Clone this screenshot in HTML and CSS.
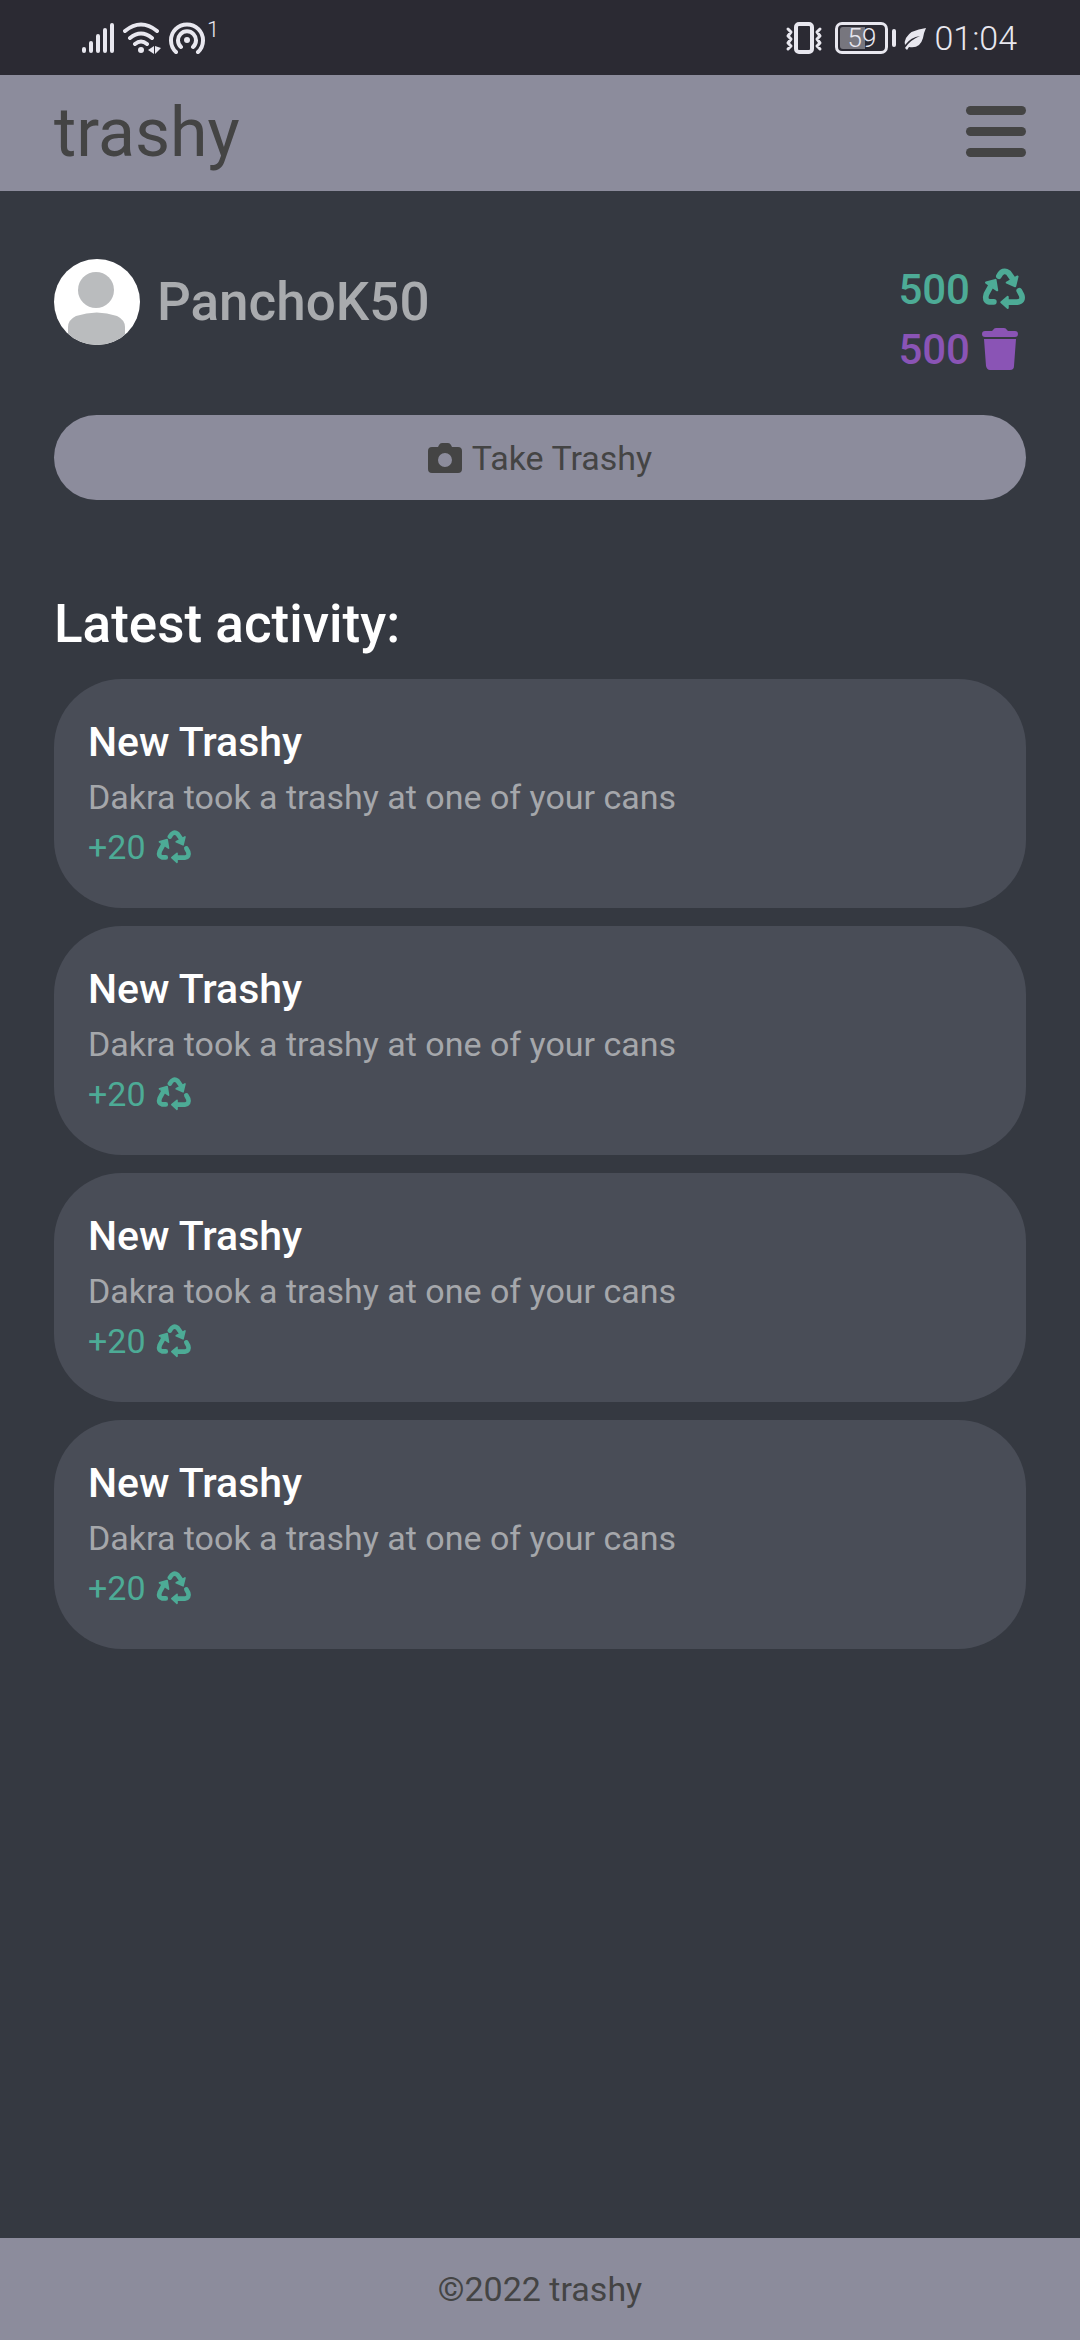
FILE: index.html
```html
<!DOCTYPE html>
<html lang="en">
<head>
<meta charset="utf-8">
<meta name="viewport" content="width=device-width, initial-scale=1">
<title>trashy</title>
<link rel="stylesheet" href="styles.css">
</head>
<body>
<svg class="sprite" aria-hidden="true">
  <symbol id="recycle" viewBox="0 0 126 124">
    <g fill="none" stroke="currentColor" stroke-width="17" stroke-linecap="round" stroke-linejoin="round">
      <path d="M48 24Q60 2 76 14L88 31"/>
      <path d="M33 100H20Q4 97 11 77L26 50"/>
      <path d="M108 67L115 80Q121 98 102 101H68"/>
    </g>
    <g fill="currentColor" stroke="currentColor" stroke-width="6" stroke-linejoin="round">
      <path d="M71 43L103 25L96 54Z"/>
      <path d="M10 43L38 35L43 66Z"/>
      <path d="M55 101L74 85V118Z"/>
    </g>
  </symbol>
</svg>

<div class="status">
  <div class="status-group">
    <svg class="icon-signal" viewBox="0 0 34 32" fill="none" stroke="currentColor" stroke-width="4" stroke-linecap="round"><path d="M3 27V29M10 21V29M17 14V29M24 8V29M31 3V29"/></svg>
    <svg class="icon-wifi" viewBox="0 0 38 32" fill="none" stroke="currentColor" stroke-width="4" stroke-linecap="round"><path d="M2 9Q18 -4 34 9M7 16Q18 7 29 16M12 22Q18 17 24 22"/><circle cx="18" cy="28" r="3" fill="currentColor" stroke="none"/><path d="M31 24V32L25 28ZM32 24V32L38 26Z" fill="currentColor" stroke="none"/></svg>
    <svg class="icon-cast" viewBox="0 0 36 32" fill="none" stroke="currentColor" stroke-width="4" stroke-linecap="round"><path d="M7 30A16 16 0 1 1 29 30M12 25A9 9 0 1 1 24 25"/><circle cx="18" cy="18" r="3" fill="currentColor" stroke="none"/></svg>
    <span class="hotspot-count">1</span>
  </div>
  <div class="status-group">
    <svg class="icon-vibrate" viewBox="0 0 38 32" fill="none" stroke="currentColor" stroke-width="3" stroke-linecap="round" stroke-linejoin="round"><rect x="11" y="2" width="16" height="28" rx="3" stroke-width="4"/><path d="M3 7L6 10L3 14L6 17L3 21L6 24L3 27M35 7L32 10L35 14L32 17L35 21L32 24L35 27"/></svg>
    <span class="battery"><span class="battery-level">59</span></span>
    <svg class="icon-leaf" viewBox="0 0 22 24"><path d="M22 2Q6 4 2 12Q0 16 1 19Q7 11 16 10Q6 14 1 22L3 24L5 21Q16 23 19 12Q20 6 22 2Z" fill="currentColor"/></svg>
    <time class="clock">01:04</time>
  </div>
</div>

<header class="topbar">
  <a class="brand" href="#">trashy</a>
  <button class="menu" type="button" aria-label="Menu"><span></span><span></span><span></span></button>
</header>

<main class="content">
  <section class="profile">
    <div class="user">
      <svg class="avatar" viewBox="0 0 86 86" aria-hidden="true"><defs><clipPath id="round"><circle cx="43" cy="43" r="43"/></clipPath></defs><g clip-path="url(#round)"><path d="M0 0H86V86H0Z" fill="#fff"/><g fill="#babcbe"><circle cx="42" cy="31" r="18"/><path d="M14 86V68Q14 61 22 57Q43 50 63 57Q71 61 71 68V86Z"/></g></g></svg>
      <h1 class="username">PanchoK50</h1>
    </div>
    <div class="scores">
      <p class="score recycled">500 <svg class="icon-recycle"><use href="#recycle"/></svg></p>
      <p class="score trashed">500 <svg class="icon-trash" viewBox="0 0 36 42" fill="currentColor"><path d="M11 2Q12 0 14 0H22Q24 0 25 2L26 3H33Q36 3 36 6Q36 9 33 9H3Q0 9 0 6Q0 3 3 3H10ZM2 11H34L32 38Q32 42 28 42H8Q5 42 4 38Z"/></svg></p>
    </div>
  </section>

  <button class="take" type="button"><svg class="icon-camera" viewBox="0 0 34 30" fill="currentColor"><path fill-rule="evenodd" d="M10 4L11 2Q12 0 14 0H20Q22 0 23 2L24 4H30Q34 4 34 8V26Q34 30 30 30H4Q0 30 0 26V8Q0 4 4 4ZM17 10A7 7 0 1 0 17 24A7 7 0 1 0 17 10Z"/></svg>Take Trashy</button>

  <section class="activity">
    <h2 class="activity-title">Latest activity:</h2>
    <ul class="feed">
      <li class="card"><h3 class="card-title">New Trashy</h3><p class="card-text">Dakra took a trashy at one of your cans</p><p class="card-points">+20 <svg class="icon-recycle-small"><use href="#recycle"/></svg></p></li>
      <li class="card"><h3 class="card-title">New Trashy</h3><p class="card-text">Dakra took a trashy at one of your cans</p><p class="card-points">+20 <svg class="icon-recycle-small"><use href="#recycle"/></svg></p></li>
      <li class="card"><h3 class="card-title">New Trashy</h3><p class="card-text">Dakra took a trashy at one of your cans</p><p class="card-points">+20 <svg class="icon-recycle-small"><use href="#recycle"/></svg></p></li>
      <li class="card"><h3 class="card-title">New Trashy</h3><p class="card-text">Dakra took a trashy at one of your cans</p><p class="card-points">+20 <svg class="icon-recycle-small"><use href="#recycle"/></svg></p></li>
    </ul>
  </section>
</main>

<footer class="footer">©2022 trashy</footer>
</body>
</html>
```
FILE: styles.css
```css
* { box-sizing: border-box; margin: 0; padding: 0; }

body {
  display: flex;
  flex-direction: column;
  min-height: 100vh;
  background: #353941;
  color: #fff;
  font-family: Roboto, "Liberation Sans", sans-serif;
  font-size: 34px;
}

svg { display: block; flex: none; }
button { border: 0; font: inherit; cursor: pointer; }
.sprite { position: absolute; width: 0; height: 0; }

/* System status bar */
.status {
  display: flex;
  justify-content: space-between;
  align-items: center;
  height: 75px;
  padding: 0 63px 0 81px;
  background: #2b2a33;
  color: #e8e7ef;
}
.status-group { display: flex; align-items: center; gap: 8px; }
.icon-signal { width: 34px; height: 32px; }
.icon-wifi { width: 38px; height: 32px; }
.icon-cast { width: 36px; height: 32px; }
.hotspot-count { align-self: flex-start; margin-left: -6px; font-size: 22px; line-height: 16px; font-weight: 300; }
.icon-vibrate { width: 38px; height: 32px; }
.battery {
  position: relative;
  width: 53px;
  height: 32px;
  margin: 0 8px 0 4px;
  padding: 2px;
  border: 3px solid currentColor;
  border-radius: 7px;
}
.battery::after {
  content: "";
  position: absolute;
  top: 4px;
  right: -11px;
  width: 4px;
  height: 18px;
  border-radius: 2px;
  background: currentColor;
}
.battery-level {
  display: block;
  height: 22px;
  border-radius: 3px;
  background: linear-gradient(90deg, #77767e 59%, transparent 59%);
  font-size: 26px;
  line-height: 22px;
  font-weight: 300;
  text-align: center;
}
.icon-leaf { width: 22px; height: 24px; }
.clock { font-size: 34px; line-height: 40px; font-weight: 300; }

/* App header */
.topbar {
  display: flex;
  justify-content: space-between;
  align-items: center;
  height: 116px;
  padding: 0 54px;
  background: #8c8c9c;
}
.brand { color: #444; font-size: 68px; line-height: 80px; text-decoration: none; }
.menu {
  display: flex;
  flex-direction: column;
  gap: 12px;
  width: 60px;
  padding-bottom: 4px;
  background: none;
}
.menu span { height: 9px; border-radius: 5px; background: #444; }

.content { flex: 1; padding: 68px 54px 40px; }

/* Profile */
.profile { display: flex; justify-content: space-between; height: 156px; }
.user { display: flex; align-items: center; gap: 17px; height: 86px; }
.avatar { width: 86px; height: 86px; }
.username { color: #a9abae; font-size: 53px; line-height: 60px; font-weight: 500; }
.score {
  display: flex;
  align-items: center;
  gap: 12px;
  height: 60px;
  font-size: 42px;
  font-weight: 500;
}
.recycled { color: #4dab96; }
.trashed { color: #8a54b5; }
.icon-recycle { width: 44px; height: 42px; }
.icon-trash { width: 36px; height: 42px; }

.take {
  display: flex;
  align-items: center;
  justify-content: center;
  gap: 10px;
  width: 100%;
  height: 85px;
  border-radius: 43px;
  background: #8c8c9c;
  color: #444;
}
.icon-camera { width: 34px; height: 30px; }

/* Activity feed */
.activity { margin-top: 92px; }
.activity-title { font-size: 53px; line-height: 64px; font-weight: 500; }
.feed { display: grid; gap: 18px; margin-top: 23px; list-style: none; }
.card { height: 229px; padding: 39px 34px; border-radius: 68px; background: #494d57; }
.card-title { font-size: 41px; line-height: 48px; font-weight: 500; }
.card-text { margin-top: 6px; color: #a5a7ab; line-height: 50px; }
.card-points { display: flex; align-items: center; gap: 10px; color: #4dab96; line-height: 50px; }
.icon-recycle-small { width: 36px; height: 34px; }

.footer { padding: 31px 54px; background: #8c8c9c; color: #444; line-height: 40px; text-align: center; }
```
